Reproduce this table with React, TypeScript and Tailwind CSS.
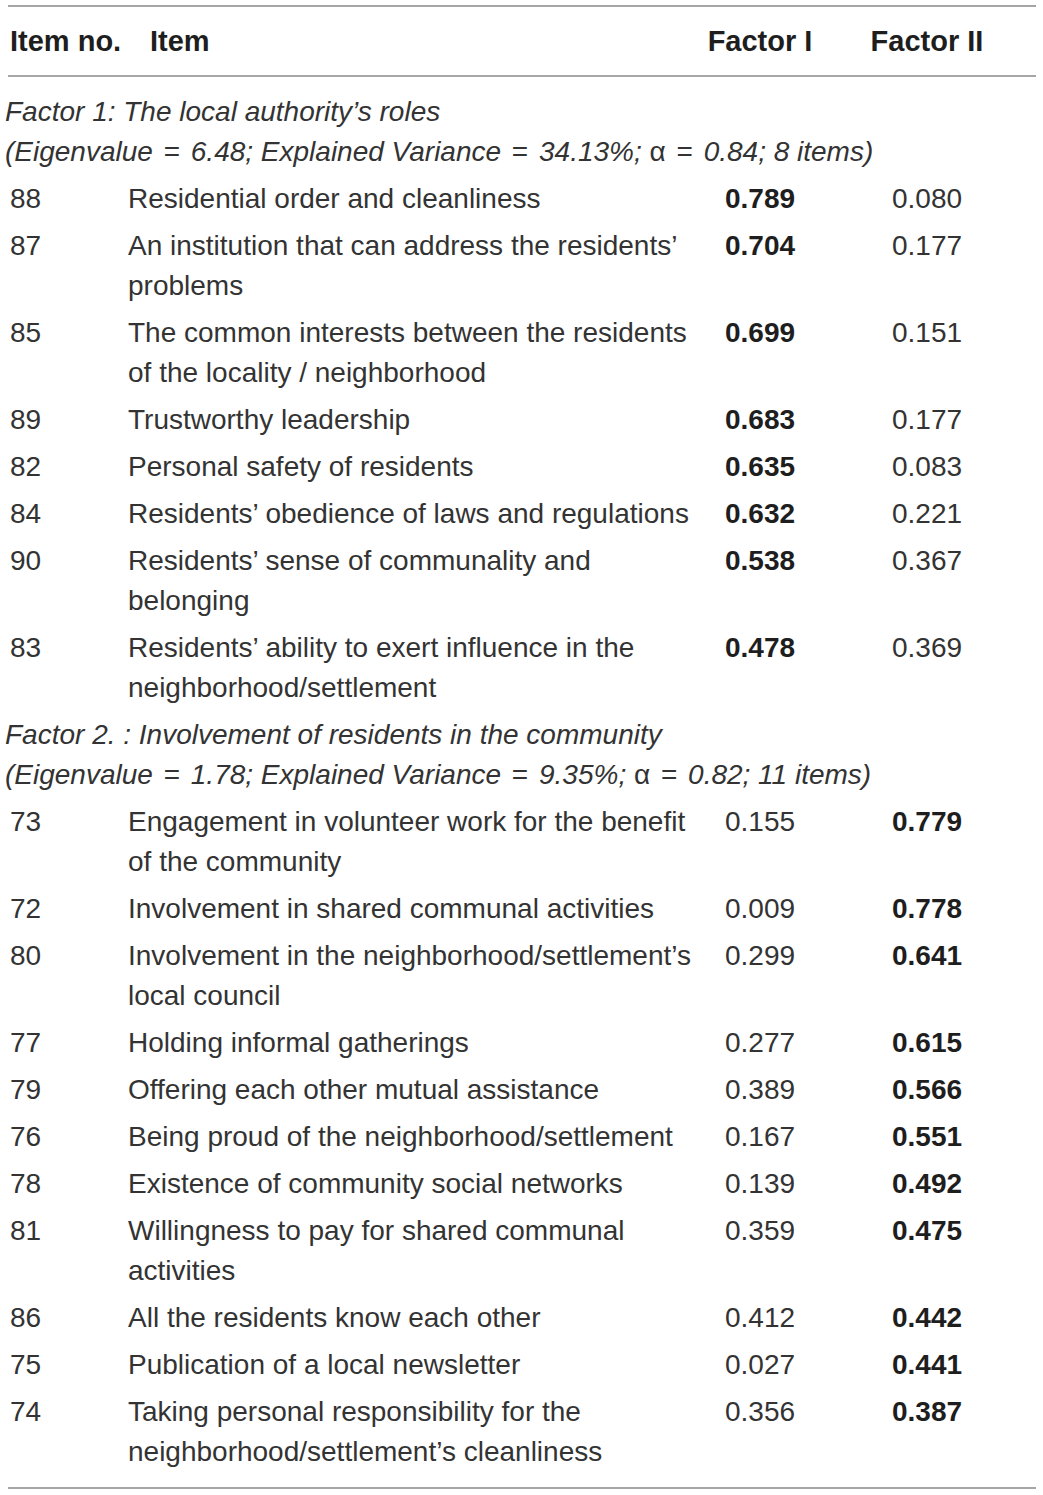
import type { ReactNode } from "react";

type Row = {
  no: string;
  lines: string[];
  f1: string;
  f2: string;
  bold: 1 | 2;
};

const group1: Row[] = [
  { no: "88", lines: ["Residential order and cleanliness"], f1: "0.789", f2: "0.080", bold: 1 },
  { no: "87", lines: ["An institution that can address the residents\u2019", "problems"], f1: "0.704", f2: "0.177", bold: 1 },
  { no: "85", lines: ["The common interests between the residents", "of the locality / neighborhood"], f1: "0.699", f2: "0.151", bold: 1 },
  { no: "89", lines: ["Trustworthy leadership"], f1: "0.683", f2: "0.177", bold: 1 },
  { no: "82", lines: ["Personal safety of residents"], f1: "0.635", f2: "0.083", bold: 1 },
  { no: "84", lines: ["Residents\u2019 obedience of laws and regulations"], f1: "0.632", f2: "0.221", bold: 1 },
  { no: "90", lines: ["Residents\u2019 sense of communality and", "belonging"], f1: "0.538", f2: "0.367", bold: 1 },
  { no: "83", lines: ["Residents\u2019 ability to exert influence in the", "neighborhood/settlement"], f1: "0.478", f2: "0.369", bold: 1 },
];

const group2: Row[] = [
  { no: "73", lines: ["Engagement in volunteer work for the benefit", "of the community"], f1: "0.155", f2: "0.779", bold: 2 },
  { no: "72", lines: ["Involvement in shared communal activities"], f1: "0.009", f2: "0.778", bold: 2 },
  { no: "80", lines: ["Involvement in the neighborhood/settlement\u2019s", "local council"], f1: "0.299", f2: "0.641", bold: 2 },
  { no: "77", lines: ["Holding informal gatherings"], f1: "0.277", f2: "0.615", bold: 2 },
  { no: "79", lines: ["Offering each other mutual assistance"], f1: "0.389", f2: "0.566", bold: 2 },
  { no: "76", lines: ["Being proud of the neighborhood/settlement"], f1: "0.167", f2: "0.551", bold: 2 },
  { no: "78", lines: ["Existence of community social networks"], f1: "0.139", f2: "0.492", bold: 2 },
  { no: "81", lines: ["Willingness to pay for shared communal", "activities"], f1: "0.359", f2: "0.475", bold: 2 },
  { no: "86", lines: ["All the residents know each other"], f1: "0.412", f2: "0.442", bold: 2 },
  { no: "75", lines: ["Publication of a local newsletter"], f1: "0.027", f2: "0.441", bold: 2 },
  { no: "74", lines: ["Taking personal responsibility for the", "neighborhood/settlement\u2019s cleanliness"], f1: "0.356", f2: "0.387", bold: 2 },
];

function DataRow({ row }: { row: Row }) {
  return (
    <div className="flex pt-[7px]">
      <div className="w-[123px] shrink-0 pl-[5px]">{row.no}</div>
      <div className="w-[576px] shrink-0 whitespace-nowrap">
        {row.lines.map((l, i) => (
          <div key={i}>{l}</div>
        ))}
      </div>
      <div className={`w-[112px] shrink-0 text-center ${row.bold === 1 ? "font-bold text-[#1e1e1e]" : ""}`}>
        {row.f1}
      </div>
      <div className={`w-[222px] shrink-0 text-center ${row.bold === 2 ? "font-bold text-[#1e1e1e]" : ""}`}>
        {row.f2}
      </div>
    </div>
  );
}

const Eq = () => <span className="px-[3px] not-italic">=</span>;
const Alpha = () => <span className="not-italic">{"\u03b1"}</span>;

function GroupTitle({ title, stats }: { title: string; stats: ReactNode }) {
  return (
    <div className="pt-[7px] italic whitespace-nowrap">
      <div>{title}</div>
      <div>{stats}</div>
    </div>
  );
}

export default function App() {
  return (
    <div
      className="min-h-screen bg-white pt-[5px] text-[28px] leading-[40px] text-[#333]"
      style={{ fontFamily: '"Liberation Sans", Arial, sans-serif' }}
    >
      <div className="w-[1033px] pl-[5px]">
        <div className="ml-[3px] h-[2px] w-[1028px] bg-[#a6a6a6]" />
        <div className="flex py-[14px] text-[29px] font-bold text-[#1e1e1e]">
          <div className="w-[123px] shrink-0 pl-[5px]">Item no.</div>
          <div className="w-[576px] shrink-0 pl-[22px]">Item</div>
          <div className="w-[112px] shrink-0 text-center">Factor I</div>
          <div className="w-[222px] shrink-0 text-center">Factor II</div>
        </div>
        <div className="ml-[3px] h-[2px] w-[1028px] bg-[#a6a6a6]" />
        <div className="pt-[8px] pb-[15px]">
          <GroupTitle
            title={"Factor 1: The local authority\u2019s roles"}
            stats={
              <>
                (Eigenvalue <Eq /> 6.48; Explained Variance <Eq /> 34.13%; <Alpha /> <Eq /> 0.84; 8 items)
              </>
            }
          />
          {group1.map((r) => (
            <DataRow key={r.no} row={r} />
          ))}
          <GroupTitle
            title="Factor 2. : Involvement of residents in the community"
            stats={
              <>
                (Eigenvalue <Eq /> 1.78; Explained Variance <Eq /> 9.35%; <Alpha /> <Eq /> 0.82; 11 items)
              </>
            }
          />
          {group2.map((r) => (
            <DataRow key={r.no} row={r} />
          ))}
        </div>
        <div className="ml-[3px] h-[2px] w-[1028px] bg-[#a6a6a6]" />
      </div>
    </div>
  );
}
